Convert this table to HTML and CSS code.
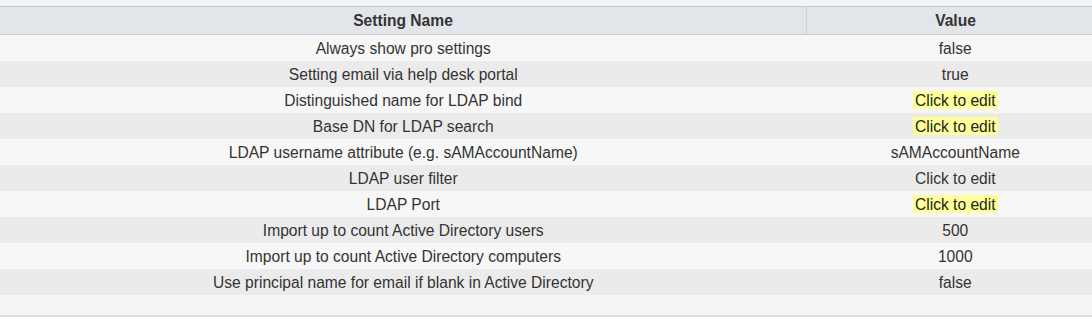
FILE: index.html
```html
<!DOCTYPE html>
<html>
<head>
<meta charset="utf-8">
<link rel="stylesheet" href="styles.css">
</head>
<body>
<div class="wrap">
  <div class="top"></div>
  <table class="grid">
    <thead>
      <tr><th class="c1">Setting Name</th><th class="c2">Value</th></tr>
    </thead>
    <tbody>
      <tr class="odd"><td>Always show pro settings</td><td>false</td></tr>
      <tr class="even"><td>Setting email via help desk portal</td><td>true</td></tr>
      <tr class="odd"><td>Distinguished name for LDAP bind</td><td><span class="hl">Click to edit</span></td></tr>
      <tr class="even"><td>Base DN for LDAP search</td><td><span class="hl">Click to edit</span></td></tr>
      <tr class="odd"><td>LDAP username attribute (e.g. sAMAccountName)</td><td>sAMAccountName</td></tr>
      <tr class="even"><td>LDAP user filter</td><td>Click to edit</td></tr>
      <tr class="odd"><td>LDAP Port</td><td><span class="hl">Click to edit</span></td></tr>
      <tr class="even"><td>Import up to count Active Directory users</td><td>500</td></tr>
      <tr class="odd"><td>Import up to count Active Directory computers</td><td>1000</td></tr>
      <tr class="even"><td>Use principal name for email if blank in Active Directory</td><td>false</td></tr>
    </tbody>
  </table>
  <div class="filler"></div>
</div>
</body>
</html>
```

FILE: styles.css
```css
html, body {
  margin: 0;
  padding: 0;
  background: #ffffff;
  overflow: hidden;
}
.wrap {
  width: 1104px;
  font-family: "Liberation Sans", Arial, sans-serif;
  font-size: 15.6px;
  color: #333333;
}
.top {
  height: 6px;
  background: #f3f4f5;
}
.grid {
  width: 1104px;
  border-collapse: collapse;
  table-layout: fixed;
}
.grid th {
  height: 27px;
  padding: 0;
  background: #e2e6ea;
  border-top: 1px solid #c6c9cc;
  border-bottom: 1px solid #c6c9cc;
  font-weight: bold;
  color: #333333;
  text-align: center;
  vertical-align: middle;
}
.grid th.c1 {
  width: 806px;
  border-right: 1px solid #d0d3d6;
}
.grid td {
  height: 26px;
  box-sizing: border-box;
  padding: 2px 0 0;
  text-align: center;
  vertical-align: middle;
  line-height: 18px;
}
.grid tr.odd td {
  background: #f7f7f7;
}
.grid tr.even td {
  background: #ebebeb;
}
.hl {
  background: #ffff99;
  color: #222222;
  padding: 1px 2px 0;
}
.filler {
  height: 20px;
  background: #f5f5f5;
  border-bottom: 2px solid #dcdcdc;
}
```
